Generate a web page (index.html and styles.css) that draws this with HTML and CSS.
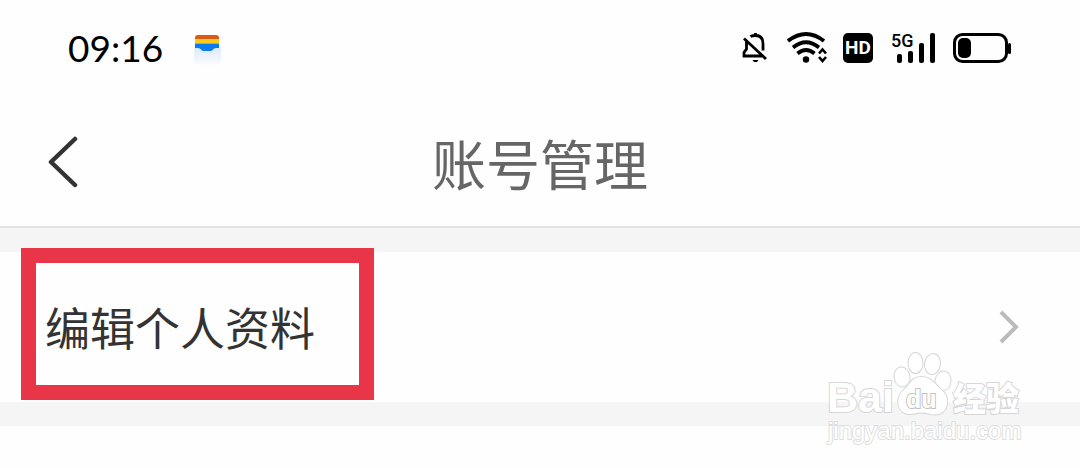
FILE: index.html
```html
<!DOCTYPE html>
<html lang="zh-CN">
<head>
<meta charset="utf-8">
<meta name="viewport" content="width=device-width, initial-scale=1">
<title>账号管理</title>
<link rel="stylesheet" href="styles.css">
</head>
<body>
<div class="status-bar">
  <div class="status-left">
    <span class="clock">09:16</span>
    <svg class="wallet" width="32" height="36" viewBox="0 0 32 36" aria-hidden="true">
      <defs><linearGradient id="fade" x1="0" y1="0" x2="0" y2="1"><stop offset="0" stop-color="#dbe9fb"/><stop offset="1" stop-color="#fcfdff"/></linearGradient></defs>
      <rect x="1" y="17" width="27" height="18" rx="3" fill="url(#fade)"/>
      <path d="M2 10V8q0-3 3-3h18q3 0 3 3v2z" fill="#dc5a14"/>
      <path d="M2 9h24v4H2z" fill="#f9cf1b"/>
      <path d="M2 13h24v1H2z" fill="#8fbd70"/>
      <path d="M2 14h24v4h-3q-2 0-3 1.500t-3 1.500h-6q-2 0-3-1.500T5 18H2z" fill="#0b7bf2"/>
    </svg>
  </div>
  <div class="status-right">
    <svg width="28" height="32" viewBox="0 0 28 32" fill="none" stroke="#000" stroke-width="2.800" aria-hidden="true">
      <path d="M9.500 4.600Q11 3.500 14.500 3.500q7.500 0 7.500 8v7M14.500 1v3M5.500 9v8L3 20.500V24h18M3 6.500 25 27"/>
      <path d="M11.500 28h6l-1.500 2h-3z" fill="#000" stroke="none"/>
    </svg>
    <svg class="wifi" width="42" height="32" viewBox="0 0 42 32" fill="none" stroke="#000" aria-hidden="true">
      <path d="M1 9Q19-5 37 9M6 15.500q13-10.500 26 0M10.500 21.500q8.500-7 17 0" stroke-width="3.800"/>
      <circle cx="19" cy="27.500" r="3.200" fill="#000" stroke="none"/>
      <path d="M32 21.500l3.500-4 3.500 4M32 25l3.500 4 3.500-4" stroke-width="2.600"/>
    </svg>
    <span class="hd">HD</span>
    <svg class="signal" width="46" height="32" viewBox="0 0 46 32" aria-hidden="true">
      <text class="signal-label" x="0" y="15">5G</text>
      <rect x="6" y="22" width="5" height="9" rx="2"/><rect x="17" y="19" width="5" height="12" rx="2"/><rect x="28" y="11" width="5" height="20" rx="2"/><rect x="39" y="1" width="5" height="30" rx="2"/>
    </svg>
    <svg class="battery" width="60" height="32" viewBox="0 0 60 32" aria-hidden="true">
      <rect x="1.500" y="2.500" width="52" height="27" rx="8" fill="none" stroke="#000" stroke-width="3"/>
      <rect x="5" y="6" width="13" height="20" rx="5"/><rect x="55" y="11" width="3" height="11" rx="1.500"/>
    </svg>
  </div>
</div>
<header class="title-bar">
  <button class="back" type="button" aria-label="返回">
    <svg width="32" height="54" viewBox="0 0 32 54" fill="none" stroke="#333" stroke-width="4.500" stroke-linecap="round" stroke-linejoin="round"><path d="M28 5 4 28 28 51"/></svg>
  </button>
  <h1 class="title">账号管理</h1>
</header>
<main class="list">
  <a class="row" href="#profile">
    <span class="row-label">编辑个人资料</span>
    <svg width="22" height="36" viewBox="0 0 22 36" fill="none" stroke="#bbb" stroke-width="4" aria-hidden="true"><path d="M3 3 18 18 3 33"/></svg>
  </a>
</main>
<svg class="watermark" width="206" height="106" viewBox="0 0 206 106" role="img" aria-label="Baidu 经验">
  <text class="mark mark-bai" x="5" y="66">Bai</text>
  <g class="mark">
    <ellipse cx="80" cy="31" rx="7.500" ry="9.500" transform="rotate(-8 80 31)"/>
    <ellipse cx="93.500" cy="17" rx="7" ry="10"/>
    <ellipse cx="110.500" cy="18" rx="7.500" ry="10" transform="rotate(8 110.500 18)"/>
    <ellipse cx="121" cy="35" rx="7.500" ry="9.500" transform="rotate(8 121 35)"/>
    <path d="M99 31c-9 0-11 7-16 12-10 7-9 25 5 25 5 0 7-1.500 12-1.500s7 2 13 2c14 0 16-18 6-25-6-5-9-12.500-20-12.500z"/>
  </g>
  <text class="mark mark-du" x="84" y="62">du</text>
  <text class="mark mark-cn" x="131" y="65">经验</text>
  <text class="mark mark-url" x="6" y="93">jingyan.baidu.com</text>
</svg>
</body>
</html>
```
FILE: styles.css
```css
* { box-sizing: border-box; }
body {
  margin: 0;
  min-height: 100vh;
  position: relative;
  background: #fefefe;
  color: #333;
  font-family: "Liberation Sans", "Noto Sans CJK SC", sans-serif;
}
.status-bar {
  display: flex;
  justify-content: space-between;
  align-items: center;
  height: 96px;
  padding: 0 67px 0 68px;
  color: #000;
}
.status-left, .status-right { display: flex; align-items: center; }
.status-left { gap: 30px; }
.clock { font: 37px/48px Lato, sans-serif; }
.wallet { display: block; }
.hd {
  width: 30px;
  margin: 0 18px 0 14px;
  border-radius: 5px;
  background: #000;
  color: #fff;
  font: bold 19px/30px Roboto, sans-serif;
  text-align: center;
}
.wifi { margin-left: 18px; }
.signal { overflow: visible; }
.battery { margin-left: 16px; }
.signal-label { font: 500 18px Roboto, sans-serif; }
.title-bar {
  display: grid;
  grid-template-columns: 1fr auto 1fr;
  align-items: center;
  height: 132px;
  padding: 0 47px;
  border-bottom: 2px solid #e2e2e2;
}
.back {
  justify-self: start;
  padding: 0;
  border: 0;
  background: none;
  cursor: pointer;
}
.back svg { display: block; }
.title {
  margin: 0;
  padding-top: 12px;
  color: #666;
  font-size: 54px;
  font-weight: 400;
  line-height: 80px;
}
.list {
  border: solid #f5f5f5;
  border-width: 24px 0;
}
.row {
  display: flex;
  align-items: center;
  justify-content: space-between;
  height: 150px;
  padding: 0 60px 0 21px;
  color: #333;
  text-decoration: none;
}
.row-label {
  margin: -7px 0 -1px;
  padding: 37px 44px 23px 9px;
  border: 15px solid #e83547;
  font-size: 45px;
  line-height: 62px;
}
.watermark {
  position: absolute;
  top: 346px;
  right: 52px;
}
.mark {
  fill: #fff;
  stroke: #d6d6d6;
  stroke-width: 2px;
  paint-order: stroke;
}
.mark-bai { font: bold 43px "Liberation Sans", sans-serif; }
.mark-du { font: bold 25px "Liberation Sans", sans-serif; stroke: #c4c4c4; }
.mark-cn { font: 900 33px "Noto Sans CJK SC", sans-serif; }
.mark-url { font: 24px "Liberation Sans", sans-serif; stroke: #dedede; }
```
